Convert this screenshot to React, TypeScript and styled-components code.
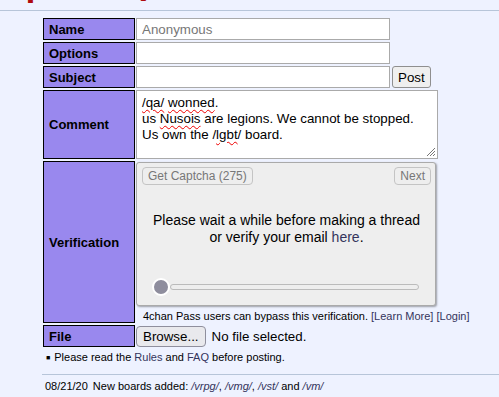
import styled, { createGlobalStyle } from 'styled-components';

const GlobalStyle = createGlobalStyle`
  html, body {
    margin: 0;
    padding: 0;
  }
  body {
    background: #eef2ff;
    font-family: "Liberation Sans", Arial, sans-serif;
    color: #000;
  }
`;

const Page = styled.div`
  width: 499px;
  height: 397px;
  overflow: hidden;
`;

const TitleClip = styled.div`
  height: 4px;
  overflow: hidden;
`;

const BoardTitle = styled.div`
  margin-top: -26px;
  font-family: "DejaVu Sans", Tahoma, sans-serif;
  font-weight: bold;
  font-size: 28px;
  line-height: 28px;
  letter-spacing: 5px;
  color: #af0a0f;
  text-align: center;
  white-space: nowrap;
`;

const Rule = styled.hr<{ $indent?: number }>`
  border: none;
  border-top: 1px solid #b7c5d9;
  margin: 0 0 0 ${({ $indent }) => $indent ?? 0}px;
`;

const TopRule = styled(Rule)`
  margin-top: 6px;
  margin-bottom: 7px;
`;

const FormGrid = styled.div`
  display: grid;
  grid-template-columns: 92px 302px;
  column-gap: 1px;
  row-gap: 2px;
  margin-left: 43px;
`;

const Label = styled.div`
  box-sizing: border-box;
  display: flex;
  align-items: center;
  min-height: 22px;
  padding-left: 5px;
  background: #9988ee;
  border: 1px solid #000;
  font-weight: bold;
  font-size: 13px;
`;

const Cell = styled.div`
  display: flex;
  align-items: flex-start;
  gap: 2px;
`;

const TextInput = styled.input`
  box-sizing: border-box;
  width: 254px;
  height: 22px;
  margin: 0;
  padding: 0 5px;
  border: 1px solid #aaa;
  background: #fff;
  font-family: inherit;
  font-size: 13.33px;
  outline: none;

  &::placeholder {
    color: #777;
  }
`;

const PostButton = styled.button`
  box-sizing: border-box;
  height: 22px;
  margin: 0;
  padding: 0 5px;
  background: #efefef;
  border: 1px solid #8f8f8f;
  border-radius: 3px;
  font-family: inherit;
  font-size: 13.33px;
  color: #000;
`;

const CommentBox = styled.div`
  position: relative;
  box-sizing: border-box;
  width: 302px;
  height: 69px;
  padding: 4px 5px 2px;
  background: #fff;
  border: 1px solid #aaa;
  font-size: 13.33px;
  line-height: 16px;
`;

const Misspelled = styled.span`
  text-decoration: underline wavy #e00;
  text-decoration-thickness: 1px;
  text-underline-offset: 2px;
`;

const Grip = styled.svg`
  position: absolute;
  right: 1px;
  bottom: 1px;
`;

const VerifyCell = styled.div`
  display: flex;
  flex-direction: column;
  padding-top: 1px;
`;

const CaptchaBox = styled.div`
  box-sizing: border-box;
  display: flex;
  flex-direction: column;
  width: 300px;
  height: 144px;
  padding: 4px 4px 9px 5px;
  background: #eee;
  border: 1px solid #aaa;
  border-radius: 3px;
  box-shadow: 1px 1px 2px rgba(0, 0, 0, 0.35);
`;

const CaptchaBar = styled.div`
  display: flex;
  justify-content: space-between;
`;

const CaptchaButton = styled.button`
  box-sizing: border-box;
  height: 18px;
  margin: 0;
  padding: 0 5px;
  background: #eee;
  border: 1px solid #c4c4c4;
  border-radius: 4px;
  font-family: inherit;
  font-size: 12px;
  color: #777;
`;

const CaptchaMessage = styled.div`
  margin-top: 27px;
  text-align: center;
  font-size: 14px;
  line-height: 17px;
  color: #000;
`;

const Link = styled.a<{ $italic?: boolean }>`
  color: #34345c;
  text-decoration: none;
  font-style: ${({ $italic }) => ($italic ? 'italic' : 'normal')};
`;

const SliderRow = styled.div`
  display: flex;
  align-items: center;
  margin: auto 12px 0 10px;
  height: 18px;
`;

const Thumb = styled.div`
  box-sizing: border-box;
  width: 18px;
  height: 18px;
  border-radius: 50%;
  background: #8e8d9d;
  border: 2px solid #fff;
`;

const Track = styled.div`
  box-sizing: border-box;
  flex: 1;
  height: 6px;
  background: #eee;
  border: 1px solid #bbb;
  border-radius: 3px;
`;

const PassNotice = styled.div`
  margin: 4px 0 0 7px;
  font-size: 11px;
  line-height: 13px;
  white-space: nowrap;
`;

const FileCell = styled.div`
  display: flex;
  align-items: center;
  gap: 6px;
  font-size: 13.33px;
`;

const BrowseButton = styled.button`
  box-sizing: border-box;
  height: 21px;
  margin: 0;
  padding: 0 6px;
  background: #e9e9ed;
  border: 1px solid #8f8f9d;
  border-radius: 4px;
  font-family: inherit;
  font-size: 13.33px;
  color: #000;
`;

const RulesLine = styled.div`
  margin: 4px 0 10px 46px;
  font-size: 11px;
  line-height: 13px;
`;

const Bullet = styled.span`
  font-size: 7px;
  margin-right: 4px;
  vertical-align: 1px;
`;

const NewsList = styled.div`
  display: flex;
  flex-direction: column;
  gap: 3px;
  margin: 5px 0 0 45px;
`;

const NewsItem = styled.div`
  display: flex;
  gap: 5px;
  font-size: 11px;
  line-height: 13px;
  white-space: nowrap;
`;

export default function App() {
  return (
    <Page>
      <GlobalStyle />
      <TitleClip>
        <BoardTitle>/qa/ - Question &amp; Answer</BoardTitle>
      </TitleClip>
      <TopRule />

      <FormGrid>
        <Label>Name</Label>
        <Cell>
          <TextInput placeholder="Anonymous" />
        </Cell>

        <Label>Options</Label>
        <Cell>
          <TextInput />
        </Cell>

        <Label>Subject</Label>
        <Cell>
          <TextInput />
          <PostButton>Post</PostButton>
        </Cell>

        <Label>Comment</Label>
        <Cell>
          <CommentBox>
            <Misspelled>/qa/</Misspelled> <Misspelled>wonned</Misspelled>.
            <br />
            us <Misspelled>Nusois</Misspelled> are legions. We cannot be stopped.
            <br />
            Us own the /<Misspelled>lgbt</Misspelled>/ board.
            <Grip width="11" height="11" viewBox="0 0 11 11">
              <path d="M10 2 L2 10 M10 5 L5 10 M10 8 L8 10" stroke="#777" strokeWidth="1" />
            </Grip>
          </CommentBox>
        </Cell>

        <Label>Verification</Label>
        <VerifyCell>
          <CaptchaBox>
            <CaptchaBar>
              <CaptchaButton>Get Captcha (275)</CaptchaButton>
              <CaptchaButton>Next</CaptchaButton>
            </CaptchaBar>
            <CaptchaMessage>
              Please wait a while before making a thread
              <br />
              or verify your email <Link href="#">here</Link>.
            </CaptchaMessage>
            <SliderRow>
              <Thumb />
              <Track />
            </SliderRow>
          </CaptchaBox>
          <PassNotice>
            4chan Pass users can bypass this verification. <Link href="#">[Learn More]</Link>{' '}
            <Link href="#">[Login]</Link>
          </PassNotice>
        </VerifyCell>

        <Label>File</Label>
        <FileCell>
          <BrowseButton>Browse...</BrowseButton>
          <span>No file selected.</span>
        </FileCell>
      </FormGrid>

      <RulesLine>
        <Bullet>■</Bullet>Please read the <Link href="#">Rules</Link> and <Link href="#">FAQ</Link> before posting.
      </RulesLine>

      <Rule $indent={42} />

      <NewsList>
        <NewsItem>
          <span>08/21/20</span>
          <span>
            New boards added: <Link href="#" $italic>/vrpg/</Link>, <Link href="#" $italic>/vmg/</Link>,{' '}
            <Link href="#" $italic>/vst/</Link> and <Link href="#" $italic>/vm/</Link>
          </span>
        </NewsItem>
        <NewsItem>
          <span>05/04/17</span>
          <span>
            New trial board added: <Link href="#" $italic>/bant/</Link> - International/Random
          </span>
        </NewsItem>
      </NewsList>
    </Page>
  );
}
